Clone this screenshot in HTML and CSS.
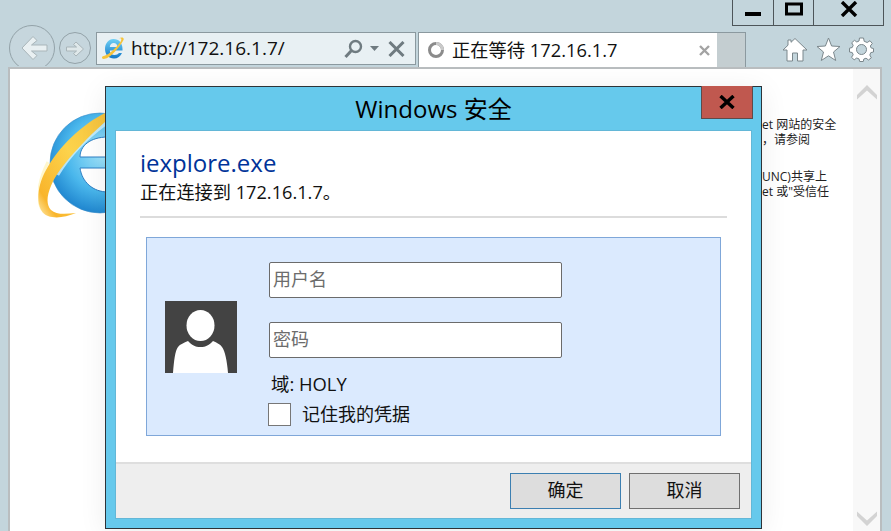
FILE: index.html
```html
<!DOCTYPE html>
<html lang="zh-CN">
<head>
<meta charset="utf-8">
<title>Windows 安全</title>
<link rel="stylesheet" href="styles.css">
</head>
<body>
<div class="window">
  <div class="topbar">
    <div class="controls">
      <div class="ctl ctl-min"><svg width="24" height="18" viewBox="0 0 24 18"><rect x="4" y="12" width="16" height="4" fill="#000"/></svg></div>
      <div class="ctl ctl-max"><svg width="20" height="18" viewBox="0 0 20 18"><rect x="2.500" y="4" width="15" height="10" fill="none" stroke="#000" stroke-width="3"/></svg></div>
      <div class="ctl ctl-close"><svg width="18" height="16" viewBox="0 0 18 16"><path d="M2 1 L16 15 M16 1 L2 15" stroke="#000" stroke-width="3.400" fill="none"/></svg></div>
    </div>
  </div>
  <div class="toolbar">
    <div class="nav-back">
      <svg width="46" height="46" viewBox="0 0 46 46"><circle cx="23" cy="23" r="22.500" fill="#c6d6dd" stroke="#93a2a8"/><path d="M13 23 L24 11.500 L28 15.500 L22.500 20 H38 V26 H22.500 L28 30.500 L24 34.500 Z" fill="#e9f0f2" stroke="#a9b5b9"/></svg>
    </div>
    <div class="nav-forward">
      <svg width="32" height="32" viewBox="0 0 32 32"><circle cx="16" cy="16" r="15.500" fill="#c6d6dd" stroke="#93a2a8"/><path d="M24.500 17 L17 10 L14.500 12.500 L17.500 15 H7.500 V19 H17.500 L14.500 21.500 L17 24 Z" fill="#dfe8ea" stroke="#a9b5b9"/></svg>
    </div>
    <div class="address">
      <svg class="addr-logo" width="24" height="25" viewBox="0 0 24 25">
        <defs><linearGradient id="eb" x1="0" y1="0" x2="0" y2="1"><stop offset="0" stop-color="#6fd0f5"/><stop offset="1" stop-color="#1278c8"/></linearGradient></defs>
        <path d="M12.500 3 C18 3 21.500 7 21.500 13 V14.500 H8.800 C9 17.500 11 19 13.500 19 C15.500 19 17 18.200 18 17 H21 C19.500 20.500 16.500 22.500 13 22.500 C7.500 22.500 4 18.500 4 13 C4 7.500 7.500 3 12.500 3 Z M8.800 11 H16.500 C16.300 8.500 14.800 7 12.700 7 C10.600 7 9 8.500 8.800 11 Z" fill="url(#eb)" fill-rule="evenodd"/>
        <path d="M2 20 C-1 23 3 24 7 21.500 C13 18 20 9 22.500 4 C23.500 1.500 21 .5 17.500 2.500 C21 1.800 21 3.500 19 6.500 C15 12 8 18.500 3.500 19.800 C2 20.500 2 20 2 20 Z" fill="#f7c33a"/>
      </svg>
      <span class="url">http://172.16.1.7/</span>
      <svg class="addr-search" width="19" height="20" viewBox="0 0 19 20"><circle cx="11.500" cy="7.500" r="5.500" fill="none" stroke="#6f7b80" stroke-width="2.400"/><path d="M7.500 11.500 L1.500 18" stroke="#6f7b80" stroke-width="3" fill="none"/></svg>
      <svg class="addr-drop" width="9" height="5" viewBox="0 0 9 5"><path d="M0 0 H9 L4.500 5 Z" fill="#6f7b80"/></svg>
      <svg class="addr-x" width="17" height="16" viewBox="0 0 17 16"><path d="M1.500 1 L15.500 15 M15.500 1 L1.500 15" stroke="#6f7b80" stroke-width="3" fill="none"/></svg>
    </div>
    <div class="tab">
      <svg class="tab-spin" width="18" height="18" viewBox="0 0 18 18"><circle cx="9" cy="9" r="6.500" fill="none" stroke="#8b8b8b" stroke-width="3"/><path d="M9 2.500 A6.500 6.500 0 0 1 15.500 9" fill="none" stroke="#c9c9c9" stroke-width="3"/></svg>
      <span class="tab-text">正在等待 172.16.1.7</span>
      <svg class="tab-x" width="11" height="11" viewBox="0 0 11 11"><path d="M1 1 L10 10 M10 1 L1 10" stroke="#a3a3a3" stroke-width="2.400" fill="none"/></svg>
    </div>
    <div class="newtab"></div>
    <div class="tools">
      <svg width="26" height="25" viewBox="0 0 26 25"><path d="M13 1.500 L25 13 H21 V24 H15.500 V16 H10.500 V24 H5 V13 H1 L6 8.200 V3 H9 V5.300 Z" fill="#fff" stroke="#7b878c"/></svg>
      <svg width="25" height="25" viewBox="0 0 25 25"><path d="M12.500 1 L15.600 9 L24 9.500 L17.500 15 L19.700 23.500 L12.500 18.800 L5.300 23.500 L7.500 15 L1 9.500 L9.400 9 Z" fill="#fff" stroke="#7b878c"/></svg>
      <svg width="25" height="25" viewBox="0 0 25 25"><path d="M10.500 1 H14.500 L15.200 4.300 L18.200 5.500 L21 3.700 L23.300 6.500 L21.300 9 L22.200 11 L24.500 11.500 V15 L21.800 15.600 L20.800 18 L22.300 20.800 L19.500 23 L17 21.200 L14.800 22 L14.300 24.500 H10.700 L10 21.900 L7.700 21 L5.200 22.800 L2.500 20.300 L4.200 17.800 L3.200 15.500 L.5 15 V11.200 L3.200 10.500 L4.200 8.300 L2.700 5.800 L5.500 3.300 L7.800 5 L10 4 Z M12.500 7.500 A5 5 0 1 0 12.500 17.500 A5 5 0 1 0 12.500 7.500 Z" fill="#fff" stroke="#7b878c" fill-rule="evenodd"/></svg>
    </div>
  </div>
  <div class="page">
    <div class="page-main">
      <svg class="ie-logo" width="100" height="110" viewBox="0 0 100 110">
        <defs>
          <radialGradient id="ball" cx=".55" cy=".4" r=".7"><stop offset="0" stop-color="#a9e8fc"/><stop offset=".55" stop-color="#4ab7ec"/><stop offset="1" stop-color="#0f73c4"/></radialGradient>
          <linearGradient id="ring" x1="0" y1="1" x2="1" y2="0"><stop offset="0" stop-color="#fff0b8"/><stop offset=".14" stop-color="#f9b52c"/><stop offset=".55" stop-color="#fcd34c"/><stop offset="1" stop-color="#f5c23c"/></linearGradient>
        </defs>
        <circle cx="62" cy="51" r="50" fill="url(#ball)" stroke="#3a8ecb" stroke-width=".6"/>
        <path d="M42 45 C42 34 52 25 70 25 V45 Z" fill="#fff" stroke="#2f7fc4"/>
        <path d="M42 56 C44 70 55 80 70 80 V56 Z" fill="#fff" stroke="#2f7fc4"/>
        <path d="M67 10 C48 24 30 42 18 62" fill="none" stroke="#d9f4ff" stroke-width="7" opacity=".75"/>
        <path d="M10 50 C0 70 -3 90 6 100" fill="none" stroke="#fff3b8" stroke-width="3" opacity=".7"/>
        <path d="M67 1 C45 12 20 35 8 58 C-3 78 -2 100 10 104 C18 107 28 105 38 101 C28 102 18 103 13 98 C5 90 12 72 22 58 C34 42 50 25 67 10 Z" fill="url(#ring)"/>
      </svg>
      <div class="page-text">
        <p class="para">et 网站的安全<br>，请参阅</p>
        <p class="para">UNC)共享上<br>et 或"受信任</p>
      </div>
    </div>
    <div class="scrollbar">
      <svg width="20" height="16" viewBox="0 0 20 16"><path d="M0 11 L10 1 L20 11 V15.500 L10 6.500 L0 15.500 Z" fill="#d3d3d3"/></svg>
      <svg width="20" height="16" viewBox="0 0 20 16"><path d="M0 .5 L10 9.500 L20 .5 V5 L10 15 L0 5 Z" fill="#d3d3d3"/></svg>
    </div>
  </div>
</div>

<div class="dialog">
  <div class="dlg-title">
    <span class="dlg-title-text">Windows 安全</span>
    <div class="dlg-close"><svg width="16" height="14" viewBox="0 0 16 14"><path d="M1.500 1 L14.500 13 M14.500 1 L1.500 13" stroke="#000" stroke-width="3.400" fill="none"/></svg></div>
  </div>
  <div class="dlg-body">
    <div class="dlg-content">
      <div class="dlg-head">
        <div class="app-name">iexplore.exe</div>
        <div class="app-sub">正在连接到 172.16.1.7。</div>
      </div>
      <div class="cred-panel">
        <div class="avatar">
          <svg width="72" height="72" viewBox="0 0 72 72"><rect width="72" height="72" fill="#434343"/><ellipse cx="35.500" cy="24.500" rx="14" ry="15.500" fill="#fff"/><path d="M8 72 C9 60 10 50 13 46 C15 43 19 42 23 40 C27 44 30 46 35.500 46 C41 46 44 44 48 40 C52 42 55 43 57 46 C60 50 62 60 63 72 Z" fill="#fff"/></svg>
        </div>
        <div class="cred-fields">
          <input class="field" type="text" placeholder="用户名">
          <input class="field field-second" type="password" placeholder="密码">
          <div class="domain">域: HOLY</div>
          <label class="remember"><span class="check"></span><span class="remember-text">记住我的凭据</span></label>
        </div>
      </div>
    </div>
    <div class="dlg-footer">
      <button class="btn btn-ok">确定</button>
      <button class="btn btn-cancel">取消</button>
    </div>
  </div>
</div>
</body>
</html>
```

FILE: styles.css
```css
* { box-sizing: border-box; }
html, body { margin: 0; height: 100%; }
body {
  width: 891px;
  height: 531px;
  overflow: hidden;
  position: relative;
  background: #c3d5dc;
  font-family: "Open Sans", "Noto Sans CJK SC", sans-serif;
  color: #111;
}
.window { display: flex; flex-direction: column; height: 531px; }

.topbar { height: 26px; display: flex; justify-content: flex-end; padding-right: 7px; flex: none; }
.controls { display: flex; height: 26px; border: 1px solid #4d5559; border-top: 0; }
.ctl { display: flex; align-items: flex-start; justify-content: center; }
.ctl-min { width: 41px; border-right: 1px solid #4d5559; }
.ctl-max { width: 40px; border-right: 1px solid #4d5559; }
.ctl-close { width: 69px; padding-top: 1px; }

.toolbar { height: 41px; flex: none; display: flex; align-items: flex-start; padding-left: 9px; overflow: visible; position: relative; }
.nav-back { width: 46px; height: 41px; margin-top: -1px; overflow: hidden; flex: none; }
.nav-back svg, .nav-forward svg, .tools svg { display: block; }
.nav-forward { width: 32px; height: 32px; margin: 6px 0 0 4px; flex: none; }
.address {
  width: 320px; height: 33px; margin: 6px 0 0 5px; flex: none;
  display: flex; align-items: center;
  background: #e8f0f3; border: 1px solid #8b999f; padding-left: 4px;
}
.addr-logo { flex: none; }
.url { font-size: 19px; margin-left: 6px; color: #111; white-space: nowrap; width: 211px; margin-top: -1px; }
.addr-search { flex: none; margin-left: 2px; }
.addr-drop { flex: none; margin-left: 7px; }
.addr-x { flex: none; margin-left: 9px; }
.tab {
  width: 299px; height: 35px; margin: 6px 0 0 2px; flex: none;
  display: flex; align-items: center;
  background: #fff; border-top: 1px solid #8b999f; border-left: 1px solid #8b999f; padding-left: 8px;
}
.tab-text { font-size: 18.300px; margin-left: 7px; width: 247px; white-space: nowrap; margin-top: -2px; }
.tab-x { flex: none; }
.newtab { width: 29px; height: 35px; margin-top: 6px; flex: none; background: #c4ced1; border: 1px solid #8b999f; border-bottom: 0; border-left: 0; }
.tools { display: flex; gap: 8px; margin: 11px 0 0 36px; flex: none; }

.page {
  flex: 1; min-height: 0;
  margin: 0 9px 0 8px;
  display: flex;
  background: #fff;
  border: 2px solid #b9bdbf;
  border-bottom: 0;
  position: relative;
}
.page-main { flex: 1; display: flex; padding: 43px 0 0 28px; overflow: hidden; }
.ie-logo { flex: none; }
.page-text { margin: 5px 0 0 624px; font-size: 12px; line-height: 15px; color: #222; white-space: nowrap; flex: none; }
.para { margin: 0 0 22px; }
.scrollbar {
  width: 27px; flex: none; background: #f8f8f8;
  display: flex; flex-direction: column; justify-content: space-between; align-items: center;
  padding: 15px 0 4px;
}

.dialog {
  position: absolute; left: 105px; top: 86px; width: 657px; height: 443px;
  background: #66c9ec; border: 1px solid #2d3338;
  padding: 0 10px 10px;
  display: flex; flex-direction: column;
  box-shadow: 0 4px 26px rgba(0, 0, 0, .08);
}
.dlg-title { height: 44px; flex: none; display: flex; align-items: center; justify-content: center; position: relative; }
.dlg-title-text { font-size: 24px; color: #000; margin-top: -4px; }
.dlg-close {
  position: absolute; right: -2px; top: -1px; width: 52px; height: 33px;
  background: #c0584f; border: 1px solid #5f4a4a; border-top: 0;
  display: flex; align-items: center; justify-content: center;
}
.dlg-body { flex: 1; background: #fff; display: flex; flex-direction: column; box-shadow: 0 0 0 1px rgba(90, 130, 150, .25); }
.dlg-content { flex: 1; padding: 15px 24px 0; }
.dlg-head { height: 72px; border-bottom: 2px solid #dcdcdc; }
.app-name { font-size: 24px; line-height: 34px; color: #003399; }
.app-sub { font-size: 18.200px; line-height: 21px; padding-top: 2px; color: #111; }
.cred-panel {
  margin: 19px 6px 0;
  height: 199px; width: 575px;
  background: #dbeafe; border: 1px solid #7fa7d9;
  display: flex; align-items: flex-start;
  padding-left: 18px;
}
.avatar { width: 72px; height: 72px; margin-top: 63px; flex: none; }
.avatar svg { display: block; }
.cred-fields { margin-left: 32px; padding-top: 24px; display: flex; flex-direction: column; }
.field {
  width: 293px; height: 36px; display: block;
  border: 1px solid #6b6b6b; border-radius: 2px; background: #fff;
  padding: 0 3px 3px; font-family: inherit; font-size: 18px; color: #111; outline: 0;
}
.field::placeholder { color: #6c6c6c; opacity: 1; }
.field-second { margin-top: 24px; }
.domain { font-size: 18.400px; line-height: 24px; margin: 14px 0 0 2px; }
.remember { display: flex; align-items: center; font-size: 18px; line-height: 23px; margin: 6px 0 0 -1px; }
.remember-text { padding-top: 1px; }
.check { width: 23px; height: 23px; background: #fff; border: 1px solid #777; margin-right: 11px; flex: none; }
.dlg-footer {
  height: 56px; flex: none;
  background: #eee; border-top: 2px solid #dedede;
  display: flex; justify-content: flex-end; gap: 8px;
  padding: 9px 11px 0 0;
}
.btn {
  width: 111px; height: 36px; background: #ddd;
  font-family: inherit; font-size: 18px; color: #111; padding: 0 0 4px;
  border: 1px solid #707070;
}
.btn-ok { border-color: #3c7fb1; }
```
